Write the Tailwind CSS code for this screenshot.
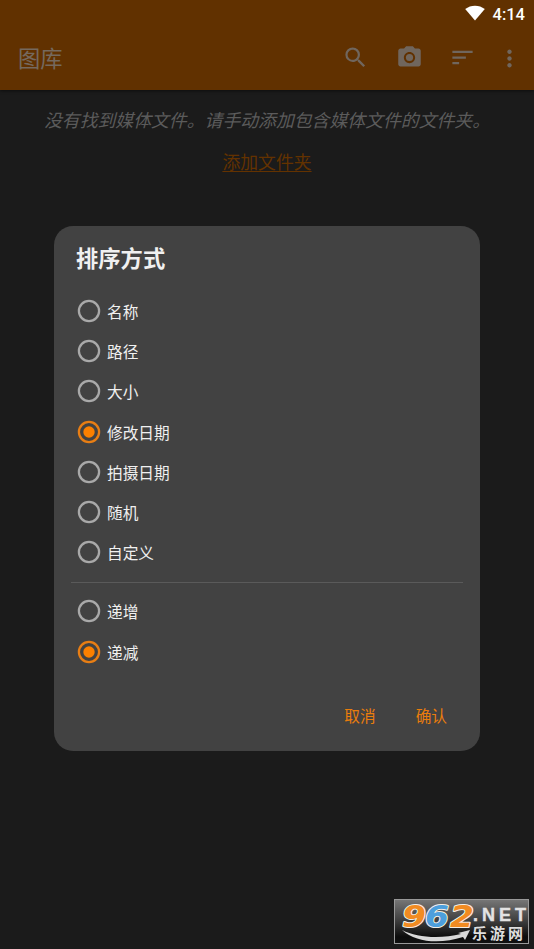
<!DOCTYPE html>
<html lang="zh-CN">
<head>
    <meta charset="UTF-8">
    <meta name="viewport" content="width=device-width, initial-scale=1.0">
    <title>图库</title>
    <script src="https://cdn.jsdelivr.net/npm/@tailwindcss/browser@4"></script>
</head>
<body class="bg-[#1b1b1b] font-['Noto_Sans_CJK_SC',sans-serif]">
    <!-- Radio icons -->
    <svg class="hidden">
        <symbol id="radio-off" viewBox="0 0 24 24">
            <circle cx="12" cy="12" r="10.100" fill="none" stroke="#a9a9a9" stroke-width="2.300"/>
        </symbol>
        <symbol id="radio-on" viewBox="0 0 24 24">
            <circle cx="12" cy="12" r="10.100" fill="none" stroke="#e87e14" stroke-width="2.300"/>
            <circle cx="12" cy="12" r="5.700" fill="#fb8000"/>
        </symbol>
    </svg>

    <div class="relative h-[949px] w-[534px] overflow-hidden">
        <!-- Header -->
        <header class="h-[90px] bg-[#613100] shadow-[0_1px_3px_rgba(0,0,0,0.5)]">
            <!-- Status bar -->
            <div class="flex h-7 items-center justify-end gap-2 pr-[9px]">
                <svg class="mb-0.5 h-4 w-5" viewBox="0 0 20 16" fill="#fff">
                    <path d="M.2 4C5.800-.5 14.200-.5 19.800 4L10 15.600Z"/>
                </svg>
                <span class="pt-px font-[Roboto,sans-serif] text-[16.500px] leading-7 font-medium text-white">4:14</span>
            </div>
            <!-- Toolbar -->
            <div class="flex h-[58px] items-center pl-[18px] text-[#70665d]">
                <h1 class="flex-1 text-[22.300px] leading-[58px] text-[#75695e]">图库</h1>
                <svg class="mr-[27px] h-[27px] w-[27px]" viewBox="0 0 24 24" fill="currentColor">
                    <path d="M15.500 14h-.79l-.28-.27A6.471 6.471 0 0 0 16 9.500 6.500 6.500 0 1 0 9.500 16c1.610 0 3.090-.59 4.230-1.570l.27.28v.79l5 4.990L20.490 19l-4.990-5zm-6 0C7.010 14 5 11.990 5 9.500S7.010 5 9.500 5 14 7.010 14 9.500 11.990 14 9.500 14z"/>
                </svg>
                <svg class="mr-[26px] h-[27px] w-[27px]" viewBox="0 0 24 24" fill="currentColor">
                    <circle cx="12" cy="12" r="3.200"/>
                    <path d="M9 2 7.170 4H4c-1.100 0-2 .9-2 2v12c0 1.100.9 2 2 2h16c1.100 0 2-.9 2-2V6c0-1.100-.9-2-2-2h-3.170L15 2H9zm3 15c-2.760 0-5-2.240-5-5s2.240-5 5-5 5 2.240 5 5-2.240 5-5 5z"/>
                </svg>
                <svg class="mr-[20px] h-[27px] w-[27px]" viewBox="0 0 24 24" fill="currentColor">
                    <path d="M3 18h6v-2H3v2zM3 6v2h18V6H3zm0 7h12v-2H3v2z"/>
                </svg>
                <svg class="mt-0.5 mr-[11px] h-[27px] w-[27px]" viewBox="0 0 24 24" fill="currentColor">
                    <path d="M12 8c1.100 0 2-.9 2-2s-.9-2-2-2-2 .9-2 2 .9 2 2 2zm0 2c-1.100 0-2 .9-2 2s.9 2 2 2 2-.9 2-2-.9-2-2-2zm0 6c-1.100 0-2 .9-2 2s.9 2 2 2 2-.9 2-2-.9-2-2-2z"/>
                </svg>
            </div>
        </header>

        <!-- Empty state -->
        <main class="flex flex-col items-center pt-4 text-[17.850px] leading-[26px]">
            <p class="whitespace-nowrap text-[#5b5b5b] italic">没有找到媒体文件。请手动添加包含媒体文件的文件夹。</p>
            <a class="mt-4 text-[#633200] underline decoration-1 underline-offset-2">添加文件夹</a>
        </main>

        <!-- Sort dialog -->
        <div class="absolute top-[225.500px] left-[53.500px] flex h-[525px] w-[426.500px] flex-col rounded-[19px] bg-[#424242] text-[15.700px] text-[#f0f0f0]">
            <h2 class="mt-[15.500px] pl-[22.500px] text-[22.300px] leading-8 font-bold">排序方式</h2>
            <ul class="mt-[18px] pl-[23.500px]">
                <li class="flex h-[40.200px] items-center gap-1.5">
                    <svg class="size-6"><use href="#radio-off"/></svg><span class="pt-[1.500px]">名称</span>
                </li>
                <li class="flex h-[40.200px] items-center gap-1.5">
                    <svg class="size-6"><use href="#radio-off"/></svg><span class="pt-[1.500px]">路径</span>
                </li>
                <li class="flex h-[40.200px] items-center gap-1.5">
                    <svg class="size-6"><use href="#radio-off"/></svg><span class="pt-[1.500px]">大小</span>
                </li>
                <li class="flex h-[40.200px] items-center gap-1.5">
                    <svg class="size-6"><use href="#radio-on"/></svg><span class="pt-[1.500px]">修改日期</span>
                </li>
                <li class="flex h-[40.200px] items-center gap-1.5">
                    <svg class="size-6"><use href="#radio-off"/></svg><span class="pt-[1.500px]">拍摄日期</span>
                </li>
                <li class="flex h-[40.200px] items-center gap-1.5">
                    <svg class="size-6"><use href="#radio-off"/></svg><span class="pt-[1.500px]">随机</span>
                </li>
                <li class="flex h-[40.200px] items-center gap-1.5">
                    <svg class="size-6"><use href="#radio-off"/></svg><span class="pt-[1.500px]">自定义</span>
                </li>
            </ul>
            <div class="mx-[17.500px] mt-[9.600px] h-px bg-[#5a5a5a]"></div>
            <ul class="mt-[8.400px] pl-[23.500px]">
                <li class="flex h-[40.200px] items-center gap-1.5">
                    <svg class="size-6"><use href="#radio-off"/></svg><span class="pt-[1.500px]">递增</span>
                </li>
                <li class="flex h-[40.200px] items-center gap-1.5">
                    <svg class="size-6"><use href="#radio-on"/></svg><span class="pt-[1.500px]">递减</span>
                </li>
            </ul>
            <div class="mt-8 flex justify-end gap-10 pr-[33px] leading-6 text-[#ea7d0c]">
                <button>取消</button>
                <button>确认</button>
            </div>
        </div>

        <!-- Site badge -->
        <svg class="absolute top-[899px] left-[394px] h-[45px] w-[135px] overflow-visible" viewBox="0 0 135 45">
            <defs>
                <linearGradient id="badge" x1="0" y1="0" x2="0" y2="1">
                    <stop offset="0" stop-color="#777"/>
                    <stop offset=".5" stop-color="#3c3c3c"/>
                    <stop offset=".85" stop-color="#0c0c0c"/>
                    <stop offset="1" stop-color="#111"/>
                </linearGradient>
            </defs>
            <rect x=".5" y=".5" width="134" height="44" fill="url(#badge)" stroke="#999"/>
            <path d="M8 31C23 39 47 40 67 35L64 34L76 31L71 41L69 38C47 45 22 44 8 31Z" fill="#d8d8d8"/>
            <g font-family="DejaVu Sans, sans-serif" font-weight="bold" font-style="italic" font-size="31" stroke="#f4eee6" stroke-width="2" stroke-linejoin="round" paint-order="stroke">
                <text x="8" y="27.500" textLength="24" lengthAdjust="spacingAndGlyphs" fill="#f18b22">9</text>
                <text x="31" y="27.500" textLength="24" lengthAdjust="spacingAndGlyphs" fill="#4d9fdc">6</text>
                <text x="56" y="27.500" textLength="24" lengthAdjust="spacingAndGlyphs" fill="#f18b22">2</text>
            </g>
            <text x="79" y="21.500" textLength="53" lengthAdjust="spacing" font-family="Liberation Sans, sans-serif" font-weight="bold" font-size="18" fill="#e2e2e2" stroke="#e2e2e2" stroke-width=".4">.NET</text>
            <text x="78" y="40" textLength="51" lengthAdjust="spacing" font-family="Liberation Sans, Noto Sans CJK SC, sans-serif" font-weight="bold" font-size="15" fill="#dedede">乐游网</text>
        </svg>
    </div>
</body>
</html>
